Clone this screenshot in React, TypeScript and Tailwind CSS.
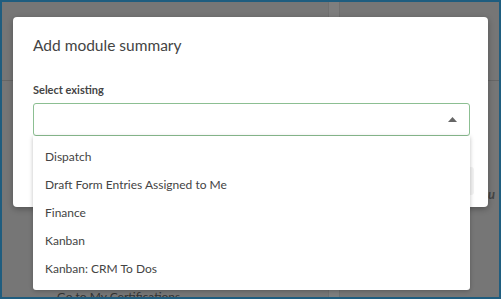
import { useState } from 'react';

const options = ['Dispatch', 'Draft Form Entries Assigned to Me', 'Finance', 'Kanban', 'Kanban: CRM To Dos'];

export default function App() {
  const [selected, setSelected] = useState('');

  return (
    <div className="relative w-[501px] h-[299px] overflow-hidden border-2 border-[#1f5d7f] bg-[#767676] font-['Lato',sans-serif]">
      {/* page behind the overlay */}
      <div className="flex h-full">
        <div className="flex flex-1 flex-col">
          <div className="h-[79px] border-b border-[#666]" />
          <div className="flex-1" />
          <div className="h-[9px] pl-[55px] text-[12px] leading-[18px] text-[#333]">Go to My Certifications</div>
        </div>
        <div className="w-[12px] bg-[#7e7e7e] border-x border-[#707070]" />
        <div className="flex w-[159px] flex-col">
          <div className="h-[79px] border-b border-[#666]" />
          <div className="pt-[104px] pl-[148px] text-[13px] italic font-bold text-[#444]">u</div>
        </div>
      </div>

      {/* modal */}
      <div className="absolute left-[11px] top-[15px] w-[475px] h-[190px] rounded-[4px] bg-white shadow-[0_2px_6px_rgba(0,0,0,0.3)]">
        <div className="px-[20px] pt-[17px]">
          <h2 className="text-[15.5px] leading-[22px] text-[#444]">Add module summary</h2>
          <div className="mt-[27px] text-[11px] font-bold leading-[14px] text-[#444]">Select existing</div>
          <div className="relative mt-[6px]">
            <button className="flex h-[33px] w-[437px] items-center justify-end rounded-[3px] border border-[#8cbf92] bg-white pr-[12px]">
              <span className="text-[12px] text-[#333]">{selected}</span>
              <svg width="9" height="5" viewBox="0 0 9 5" className="ml-auto">
                <path d="M0 5 L4.5 0 L9 5 Z" fill="#666" />
              </svg>
            </button>
            <div className="absolute left-0 top-[33px] z-10 w-[437px] rounded-b-[3px] bg-white py-[7px] shadow-[0_1px_4px_rgba(0,0,0,0.25)]">
              {options.map((o) => (
                <div
                  key={o}
                  onClick={() => setSelected(o)}
                  className="h-[28px] px-[12px] text-[12px] leading-[28px] text-[#444]"
                >
                  {o}
                </div>
              ))}
            </div>
          </div>
        </div>
        <div className="absolute right-[14px] top-[150px] h-[28px] w-[60px] rounded-[3px] bg-[#f3f3f3]" />
      </div>
    </div>
  );
}
